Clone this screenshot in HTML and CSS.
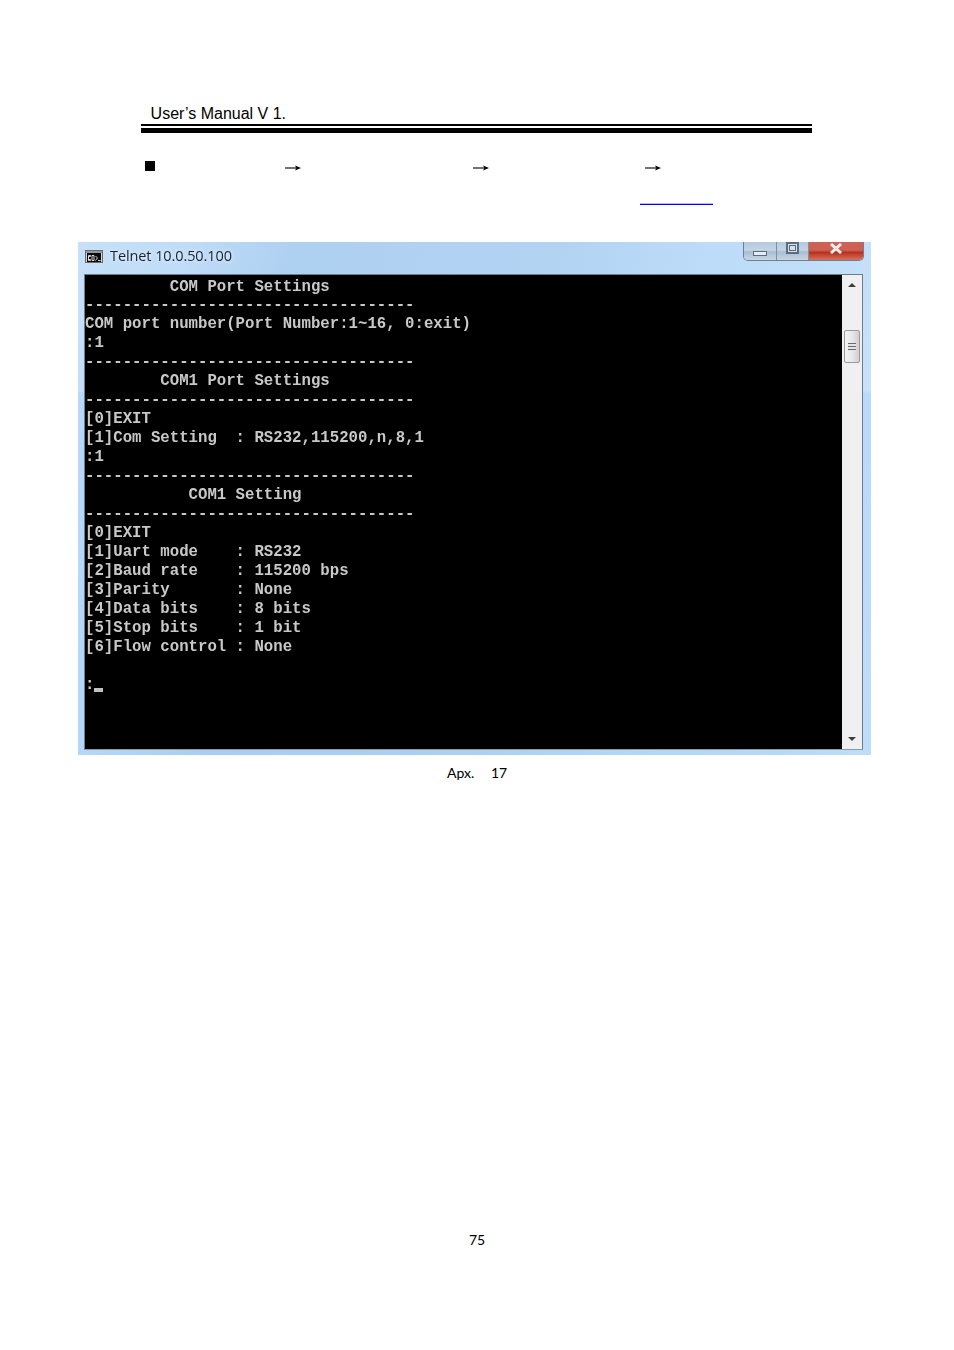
FILE: index.html
```html
<!DOCTYPE html>
<html lang="en">
<head>
<meta charset="utf-8">
<title>User's Manual</title>
<link rel="stylesheet" href="styles.css">
</head>
<body>
<div class="page">
  <header class="head">
    <div class="head-title">User’s Manual V 1.</div>
    <div class="rule-thin"></div>
    <div class="rule-thick"></div>
  </header>
  <div class="path">
    <span class="bullet"></span>
    <svg class="arrow a1" viewBox="0 0 16 6" width="16" height="6"><path d="M0 3H12" stroke="#000" stroke-width="1.1"/><path d="M10 .4L16 3L10 5.6L11.4 3Z" fill="#000"/></svg>
    <svg class="arrow a2" viewBox="0 0 16 6" width="16" height="6"><path d="M0 3H12" stroke="#000" stroke-width="1.1"/><path d="M10 .4L16 3L10 5.6L11.4 3Z" fill="#000"/></svg>
    <svg class="arrow a3" viewBox="0 0 16 6" width="16" height="6"><path d="M0 3H12" stroke="#000" stroke-width="1.1"/><path d="M10 .4L16 3L10 5.6L11.4 3Z" fill="#000"/></svg>
  </div>
  <div class="linkline"><span class="link"></span></div>
  <section class="window">
    <div class="titlebar">
      <svg class="cmd-icon" viewBox="0 0 18 13" width="18" height="13">
        <rect x=".5" y=".5" width="17" height="12" fill="#d8d8d8" stroke="#6b6b6b"/>
        <rect x="1" y="1" width="16" height="2" fill="#8f9aa6"/>
        <rect x="2" y="3" width="14" height="9" fill="#0a0a0a"/>
        <path d="M3.5 5.5h2v1h-2v3h2v1h-2zM7 5.5h2v5H7zM10.5 6l2 2-2 2.5M13 10.5h2.5" fill="none" stroke="#e6e6e6" stroke-width=".9"/>
      </svg>
      <span class="title-text">Telnet 10.0.50.100</span>
      <div class="controls">
        <div class="btn btn-min"><span class="min-glyph"></span></div>
        <div class="btn btn-max"><span class="max-glyph"></span></div>
        <div class="btn btn-close">
          <svg viewBox="0 0 14 11" width="14" height="11"><path d="M2 1L12 10M12 1L2 10" stroke="#fff" stroke-width="2.8"/><path d="M2 1L12 10M12 1L2 10" stroke="#6d6d6d" stroke-width=".5" opacity=".5"/></svg>
        </div>
      </div>
    </div>
    <div class="console">
      <pre class="screen">         COM Port Settings
-----------------------------------
COM port number(Port Number:1~16, 0:exit)
:1
-----------------------------------
        COM1 Port Settings
-----------------------------------
[0]EXIT
[1]Com Setting  : RS232,115200,n,8,1
:1
-----------------------------------
           COM1 Setting
-----------------------------------
[0]EXIT
[1]Uart mode    : RS232
[2]Baud rate    : 115200 bps
[3]Parity       : None
[4]Data bits    : 8 bits
[5]Stop bits    : 1 bit
[6]Flow control : None

:<span class="cursor"></span></pre>
      <div class="scrollbar">
        <div class="sb-btn"><span class="tri-up"></span></div>
        <div class="sb-track">
          <div class="sb-thumb"><span class="grip"></span></div>
        </div>
        <div class="sb-btn"><span class="tri-down"></span></div>
      </div>
    </div>
  </section>
  <div class="caption"><span class="cap-label">Apx.</span>17</div>
  <footer class="pageno">75</footer>
</div>
</body>
</html>
```
FILE: styles.css
```css
* { box-sizing: border-box; }
html, body { margin: 0; padding: 0; background: #fff; }
.page {
  width: 954px;
  height: 1350px;
  padding-top: 104px;
  overflow: hidden;
}
.head { margin: 0 142px 0 141px; }
.head-title {
  font: 16px/20px "Liberation Sans", Arial, sans-serif;
  color: #000;
  padding-left: 9.6px;
  height: 20px;
}
.rule-thin { height: 2px; background: #000; }
.rule-thick { height: 5px; background: #000; margin-top: 2px; }
.path {
  height: 10px;
  margin-top: 28px;
  padding-left: 145px;
  display: flex;
  align-items: center;
}
.bullet { width: 10px; height: 10px; background: #000; flex: none; }
.arrow { flex: none; margin-top: 3px; }
.a1 { margin-left: 130px; }
.a2 { margin-left: 172px; }
.a3 { margin-left: 156px; }
.linkline { height: 35px; padding-left: 640px; padding-top: 32px; }
.link { display: block; width: 73px; height: 2px; background: linear-gradient(180deg, #b8b8ff 50%, #0000ff 50%); }
.window {
  margin: 36px 83px 0 78px;
  height: 513px;
  padding: 0 8px 5px 6px;
  background:
    linear-gradient(180deg, rgba(190,222,250,0) 0 29%, rgba(150,200,245,.28) 29.5% 100%),
    linear-gradient(100deg, #c6e0f8 0%, #bfdcf8 12%, #aed0f1 25%, #b3d3f3 55%, #bcdcf9 72%, #c2dff9 88%, #cfe5f9 100%);
  display: flex;
  flex-direction: column;
}
.titlebar {
  height: 32px;
  flex: none;
  display: flex;
  align-items: flex-start;
  position: relative;
}
.cmd-icon { margin: 8px 0 0 1px; flex: none; }
.title-text {
  font: 14.5px/20px "Open Sans", sans-serif;
  letter-spacing: -.09px;
  color: #1a2230;
  margin: 4px 0 0 7px;
  text-shadow: 0 0 4px rgba(255,255,255,.9);
  filter: blur(.3px);
}
.controls {
  margin-left: auto;
  display: flex;
  height: 19px;
  width: 121px;
  margin-right: -1px;
  border: 1px solid #6f7f92;
  border-top: 0;
  border-radius: 0 0 5px 5px;
  overflow: hidden;
}
.btn { height: 100%; display: flex; align-items: center; justify-content: center; }
.btn-min, .btn-max {
  background: linear-gradient(180deg, #b3c9de 0%, #c3d4e5 45%, #a9bdd1 55%, #c8d6e4 100%);
  border-right: 1px solid #7f8fa2;
}
.btn-min { width: 33px; }
.btn-max { width: 32px; }
.btn-close {
  flex: 1;
  background: linear-gradient(180deg, #c9645a 0%, #d0604f 45%, #b5321f 58%, #d8705c 100%);
}
.btn-close svg { margin-top: -6px; }
.min-glyph { width: 14px; height: 5px; background: #e6ecf2; border: 1px solid #5d6d80; margin-top: 4px; }
.max-glyph { width: 13px; height: 12px; border: 2px solid #5b6b80; background: #d4e0ec; position: relative; top: -3px; box-shadow: inset 0 0 0 1px #d4e0ec, inset 0 0 0 2px #5b6b80; }
.console {
  flex: 1;
  display: flex;
  min-height: 0;
  border: 1px solid #6d7d8d;
  border-bottom-color: #8a97a5;
  background: #000;
}
.screen {
  flex: 1;
  margin: 0;
  padding: 2.5px 0 0 0;
  color: #c8c8c8;
  font: bold 15.7px/18.95px "Liberation Mono", monospace;
  white-space: pre;
  overflow: hidden;
  filter: blur(.35px);
}
.cursor {
  display: inline-block;
  width: 9px;
  height: 4px;
  background: #c0c0c0;
  vertical-align: -3px;
}
.scrollbar {
  width: 20px;
  flex: none;
  display: flex;
  flex-direction: column;
  background: #f0f0f0;
}
.sb-btn { height: 20px; flex: none; display: flex; align-items: center; justify-content: center; }
.tri-up, .tri-down { width: 0; height: 0; border-left: 4.5px solid transparent; border-right: 4.5px solid transparent; }
.tri-up { border-bottom: 4.5px solid #3f3f3f; }
.tri-down { border-top: 4.5px solid #3f3f3f; }
.sb-track { flex: 1; padding: 35px 2px 0; }
.sb-thumb {
  height: 33px;
  border: 1px solid #9a9a9a;
  border-radius: 2px;
  background: linear-gradient(90deg, #f5f5f5, #e6e6e6 55%, #cfcfcf);
  display: flex;
  align-items: center;
  justify-content: center;
}
.grip {
  width: 8px;
  height: 8px;
  background: repeating-linear-gradient(180deg, #6a6a6a 0 1px, #e4e4e4 1px 3px);
}
.caption {
  font: 14px/18px Lato, sans-serif;
  color: #000;
  margin-top: 9px;
  padding-left: 447px;
  height: 18px;
  display: flex;
}
.cap-label { width: 44px; }
.pageno {
  font: 14px/18px Lato, sans-serif;
  color: #000;
  text-align: center;
  margin-top: 449px;
}
```
